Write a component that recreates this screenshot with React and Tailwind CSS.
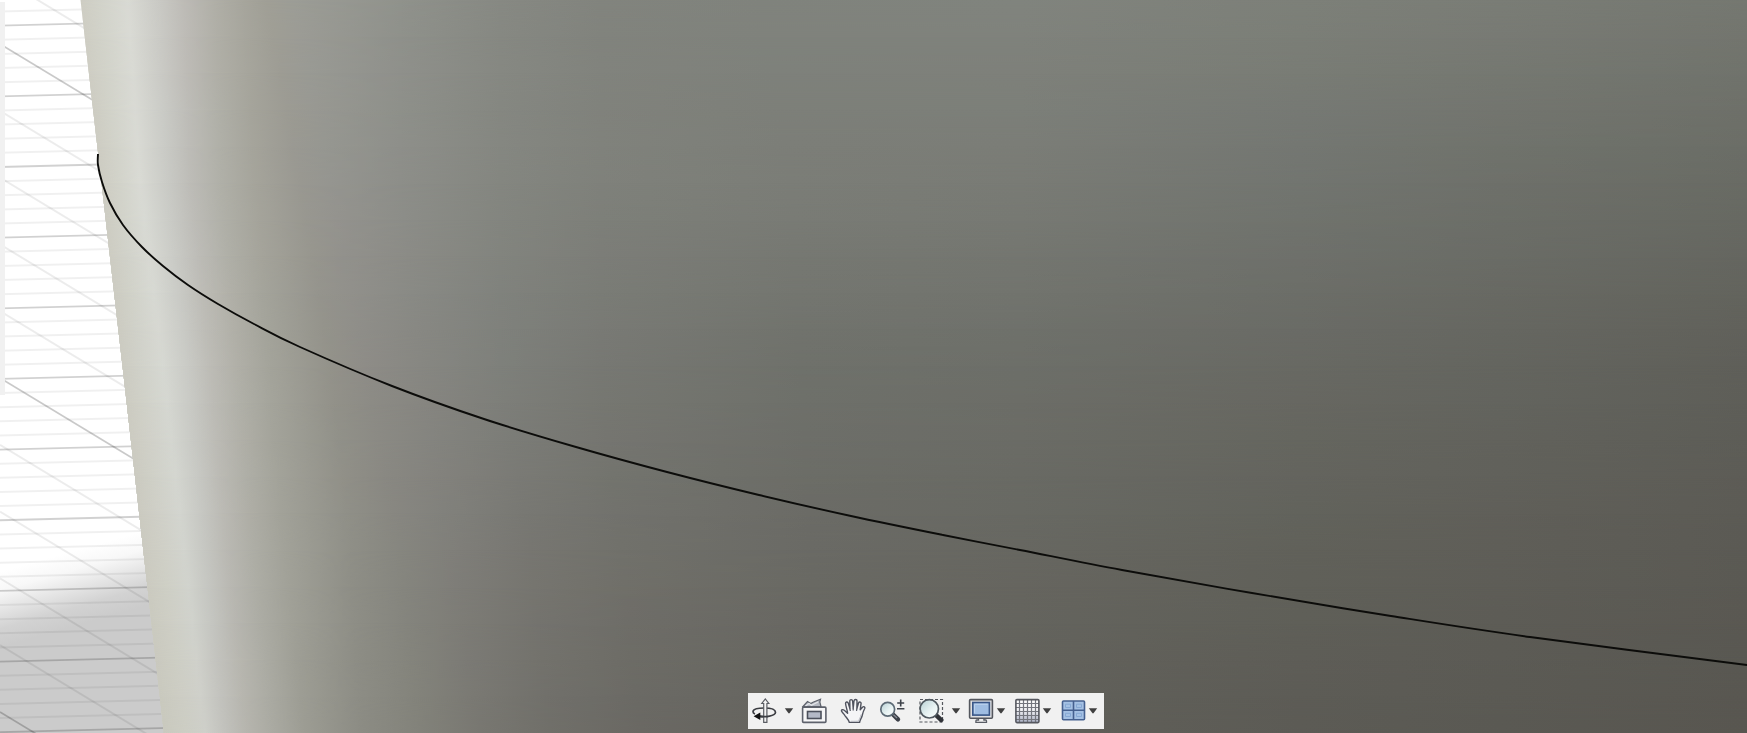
import React from "react";

/* Surface shading: every row lists the same columns, so positions and colours can be blended between rows. */
const KEYS = [
  { y: 0, x: [80, 100, 128, 158, 185, 215, 245, 267, 295, 400, 500, 600, 760, 1020, 1300, 1500, 1747], c: "cecdc3 d2d3ca d9dad4 cacac5 bdbbb6 b0afa7 a6a59c a09f96 9c9d96 90928c 878983 82847e 80837d 81847e 7d8079 7a7d76 757871" },
  { y: 183, x: [101, 120, 140, 166, 190, 220, 255, 300, 330, 400, 500, 600, 790, 1020, 1300, 1500, 1747], c: "cdccc2 d2d3ca d9dad4 cacbc6 bdbcb7 b0b0a8 a5a49b 999891 959590 8d8e89 848680 7f817b 7b7d77 797b75 727570 6e706a 696b64" },
  { y: 366, x: [122, 140, 163, 186, 210, 236, 268, 330, 365, 420, 500, 600, 800, 1020, 1300, 1500, 1747], c: "cccbc1 d0d1c9 d6d8d2 cacbc6 bdbcb6 b1b0a8 a4a49b 93928a 8e8c87 878782 7e807b 777873 6f716b 6d6f69 686963 64655f 5f5f59" },
  { y: 550, x: [143, 162, 184, 204, 226, 252, 284, 350, 400, 450, 530, 620, 810, 1020, 1300, 1500, 1747], c: "cbcac0 cfcfc6 d2d4ce c6c7c2 bab9b3 aeaea6 a2a299 8f8f87 86867f 807f7a 777671 71716b 6a6a65 676761 61615a 5f5e58 5b5a54" },
  { y: 733, x: [164, 185, 205, 225, 246, 272, 305, 360, 420, 480, 550, 640, 820, 1020, 1300, 1500, 1747], c: "c9c9be cccdc3 cecfc9 c1c1bc b6b5ae aaaaa2 9c9c93 8c8c84 82827a 787771 706f69 6a6863 64635d 605f59 5c5b55 5a5953 585650" },
];

const rgb = (hex) => [0, 2, 4].map((i) => parseInt(hex.slice(i, i + 2), 16));
const mix = (a, b, t) => a + (b - a) * t;
const STEPS = 5;

const ROWS = KEYS.flatMap((key, k) => {
  const next = KEYS[k + 1];
  const from = key.c.split(" ").map(rgb);
  const to = next ? next.c.split(" ").map(rgb) : from;
  return Array.from({ length: next ? STEPS : 1 }, (_, s) => {
    const t = s / STEPS;
    return {
      y: next ? mix(key.y, next.y, t) : key.y,
      stops: key.x.map((x, i) => [
        next ? mix(x, next.x[i], t) : x,
        `rgb(${from[i].map((v, n) => mix(v, to[i][n], t).toFixed(1)).join(",")})`,
      ]),
    };
  });
});

const EDGE = [[98, 154], [98, 165], [102, 182], [110, 203], [123, 225], [142, 247], [163, 266], [188, 285], [218, 304], [254, 324], [300, 347], [392, 386], [484, 419], [576, 447], [667, 472], [759, 495], [851, 516], [943, 535], [1020, 550], [1122, 570], [1252, 593], [1391, 616], [1530, 637], [1747, 665]];

function smooth(points) {
  let d = `M${points[0][0]} ${points[0][1]}`;
  for (let i = 0; i < points.length - 1; i++) {
    const a = points[Math.max(i - 1, 0)];
    const b = points[i];
    const c = points[i + 1];
    const e = points[Math.min(i + 2, points.length - 1)];
    d += ` C${b[0] + (c[0] - a[0]) / 6} ${b[1] + (c[1] - a[1]) / 6} ${c[0] - (e[0] - b[0]) / 6} ${c[1] - (e[1] - b[1]) / 6} ${c[0]} ${c[1]}`;
  }
  return d;
}

function Scene() {
  const flat = Array.from({ length: 56 }, (_, k) => k - 2);
  const slanted = Array.from({ length: 14 }, (_, k) => k - 3);
  return (
    <svg
      className="absolute inset-0 h-full w-full"
      viewBox="0 0 1747 733"
      preserveAspectRatio="xMinYMin slice"
      role="img"
      aria-label="Model viewport"
    >
      <defs>
        <linearGradient id="shadow" gradientUnits="userSpaceOnUse" x1="0" y1="572" x2="20" y2="642">
          <stop offset="0" stopColor="#cbcbcb" stopOpacity="0" />
          <stop offset="0.25" stopColor="#cbcbcb" stopOpacity="0.14" />
          <stop offset="0.75" stopColor="#cbcbcb" stopOpacity="0.86" />
          <stop offset="1" stopColor="#cbcbcb" />
        </linearGradient>
        <clipPath id="body">
          <path d="M80.5 0L122.5 366L164 733H1747V0Z" />
        </clipPath>
        {ROWS.map((row, i) => (
          <React.Fragment key={row.y}>
            <linearGradient id={`row${i}`} gradientUnits="userSpaceOnUse" x1="0" y1="0" x2="1747" y2="0">
              {row.stops.map(([x, color], n) => (
                <stop key={n} offset={x / 1747} stopColor={color} />
              ))}
            </linearGradient>
            {i > 0 && (
              <>
                <linearGradient id={`fade${i}`} gradientUnits="userSpaceOnUse" x1="0" y1={ROWS[i - 1].y} x2="0" y2={row.y}>
                  <stop offset="0" stopColor="#fff" stopOpacity="0" />
                  <stop offset="1" stopColor="#fff" />
                </linearGradient>
                <mask id={`mask${i}`} maskUnits="userSpaceOnUse" x="0" y="0" width="1747" height="733">
                  <rect width="1747" height="733" fill={`url(#fade${i})`} />
                </mask>
              </>
            )}
          </React.Fragment>
        ))}
      </defs>

      <rect width="1747" height="733" fill="#fff" />
      <rect width="200" height="733" fill="url(#shadow)" />
      {flat.map((k) => {
        const y = 25.7 + 14.13 * k;
        return (
          <line key={k} x1="0" y1={y} x2="200" y2={y - 5} stroke="#000" strokeWidth={k % 5 === 0 ? 1.8 : 2} strokeOpacity={k % 5 === 0 ? 0.18 : 0.06} />
        );
      })}
      {slanted.map((k) => {
        const y = 44 + 66.8 * k;
        return (
          <line key={k} x1="0" y1={y} x2="200" y2={y + 121} stroke="#000" strokeWidth={k % 5 === 0 ? 1.7 : 2} strokeOpacity={k % 5 === 0 ? 0.21 : 0.075} />
        );
      })}
      <rect y="2" width="5" height="393" fill="#f1f1f1" />

      <g clipPath="url(#body)">
        <rect width="1747" height="733" fill="url(#row0)" />
        {ROWS.slice(1).map((row, i) => (
          <rect key={row.y} width="1747" height="733" fill={`url(#row${i + 1})`} mask={`url(#mask${i + 1})`} />
        ))}
      </g>
      <path d={smooth(EDGE)} fill="none" stroke="#0c0c0a" strokeWidth="1.9" />
    </svg>
  );
}

function Icon({ children }) {
  return (
    <svg width="26" height="26" viewBox="0 0 26 26" fill="none" aria-hidden="true" className="block shrink-0">
      {children}
    </svg>
  );
}

const OrbitIcon = () => (
  <Icon>
    <path d="M8 18.2C14 19.5 24.5 18 24.5 14.3C24.5 11 18 10 13 10C7.5 10 2 11.2 2 13.8C2 14.8 2.8 15.5 4 16" stroke="#3b3d42" strokeWidth="1.7" />
    <path d="M12.7 24.3V5.5H10.8L14.3 1L17.8 5.5H15.9V24.3Z" fill="#f4f4f4" stroke="#5a5d63" strokeWidth="1.2" />
    <path d="M9 18.3C11 18.7 14.5 18.8 17 18.5" stroke="#3b3d42" strokeWidth="1.7" />
    <path d="M2.6 18.3L9.3 14.6V22Z" fill="#111" />
  </Icon>
);

const LookAtIcon = () => (
  <Icon>
    <path d="M2 8.5L6.5 3.5L9.8 5.5L12 4.3L19.5 1.3L18.8 4L20 8.5Z" fill="#b5b9c2" stroke="#5e626c" strokeWidth="1.2" />
    <path d="M4.5 8L8 5.5L10.5 7.3L17 4" stroke="#e4e6ea" strokeWidth="1.2" />
    <rect x="1.6" y="9.1" width="23.3" height="15.3" rx="1" fill="#f6f6f7" stroke="#5e626c" strokeWidth="1.6" />
    <rect x="6.5" y="13.5" width="13.5" height="7" fill="#b4b9c6" stroke="#4c505b" strokeWidth="1.6" />
  </Icon>
);

const PanIcon = () => (
  <Icon>
    <path
      d="M9.3 24.4C8.8 21.8 6.5 19.8 4.8 17.3C3.7 15.6 2 14.4 1.5 13.1C1.2 11.7 2.9 11.2 4.2 12.2L7.6 15.2C7.4 12 5.8 8.5 5.6 5.7C5.4 3.8 7.6 3.3 8.2 5L9.9 10.6L9.8 3C9.8 1.1 12.4 1.1 12.6 3L13.2 10.2L14 2.8C14.4 1 17.1 1.2 17 3L16.9 10.6L18.6 4.8C19.4 3.3 21.5 4.1 21 5.9L20.2 11.8L22.5 9.2C23.7 8 25.3 9 24.7 10.5C23.2 13.2 22.8 15 22.2 17.5C21.7 20.2 19.8 21.5 19.6 24.4Z"
      fill="#f5f5f7" stroke="#50535e" strokeWidth="1.4" strokeLinejoin="round"
    />
    <path d="M9.9 10.6L10.3 13M13.2 10.2V12.5M16.9 10.6L16.5 12.8" stroke="#50535e" strokeWidth="1.2" />
    <path d="M11 23.3C14 23.3 17 23.3 18.8 23.1C19 21 20.6 19.5 21.1 16.5" stroke="#b9bbc2" />
  </Icon>
);

const LensGradient = ({ id }) => (
  <linearGradient id={id} x1="0" y1="0" x2="1" y2="1">
    <stop offset="0" stopColor="#b7d0d4" />
    <stop offset="0.6" stopColor="#eaf4f4" />
    <stop offset="1" stopColor="#fff" />
  </linearGradient>
);

const ZoomIcon = () => (
  <Icon>
    <LensGradient id="lensA" />
    <path d="M13.8 16.2L19 21.4" stroke="#3c4048" strokeWidth="4.4" strokeLinecap="round" />
    <path d="M14.5 16.7L18 20" stroke="#8a8f98" strokeWidth="1.2" />
    <circle cx="8.7" cy="11.2" r="6.9" fill="url(#lensA)" stroke="#5d6b76" strokeWidth="1.7" />
    <path d="M18.2 5H25.2M21.7 1.4V8.6M18 10.7H25.4" stroke="#3f434b" strokeWidth="1.6" />
  </Icon>
);

const ZoomWindowIcon = () => (
  <Icon>
    <LensGradient id="lensB" />
    <rect x="2" y="1.5" width="22.5" height="22.5" stroke="#55585e" strokeWidth="1.2" strokeDasharray="3 2" />
    <path d="M18.3 17.3L23.3 22.1" stroke="#303338" strokeWidth="4.4" strokeLinecap="round" />
    <circle cx="11.3" cy="10.8" r="9.2" fill="url(#lensB)" stroke="#505960" strokeWidth="1.7" />
  </Icon>
);

const DisplayIcon = () => (
  <Icon>
    <path d="M10.5 20.5V22H8.7Q7.9 22 7.9 23V24.3H18.5V23Q18.5 22 17.7 22H15.9V20.5" fill="#eee" stroke="#595d65" strokeWidth="1.3" />
    <rect x="1.6" y="1.6" width="22.8" height="18.6" rx="1" fill="#dfe0e2" stroke="#54575e" strokeWidth="1.6" />
    <rect x="4.8" y="4.5" width="16.6" height="12.6" fill="#9fbde2" stroke="#3a5788" strokeWidth="1.6" />
    <path d="M6.5 15V6.3H19.7" stroke="#bcd2ee" />
  </Icon>
);

const GridIcon = () => (
  <Icon>
    <linearGradient id="cells" x1="0" y1="0" x2="0" y2="1">
      <stop offset="0" stopColor="#fff" />
      <stop offset="0.45" stopColor="#f1f1f4" />
      <stop offset="1" stopColor="#a9afc2" />
    </linearGradient>
    <rect x="1.9" y="1.6" width="23" height="23" rx="1" fill="url(#cells)" />
    <path d="M5.5 2V24M9.5 2V24M13.5 2V24M17.5 2V24M21.5 2V24M2 5.5H25M2 9.5H25M2 13.5H25M2 17.5H25M2 21.5H25" stroke="#74767e" strokeWidth="1.2" />
    <rect x="1.9" y="1.6" width="23" height="23" rx="1" stroke="#56585f" strokeWidth="1.6" />
  </Icon>
);

const ViewportsIcon = () => (
  <Icon>
    <rect x="2.5" y="3" width="22" height="18.7" rx="1" fill="#a5c1e4" stroke="#45608f" strokeWidth="1.6" />
    <path d="M13.5 3V22M2.5 12.3H24.5" stroke="#45608f" strokeWidth="1.6" />
    <path d="M5.5 6.2H10.5V9.5H5.5ZM16.5 6.2H21.5V9.5H16.5ZM5.5 15.3H10.5V18.5H5.5ZM16.5 15.3H21.5V18.5H16.5Z" stroke="#86a8d4" />
  </Icon>
);

function Caret({ label }) {
  return (
    <button type="button" aria-label={label} className="flex h-[26px] w-3 items-center justify-center">
      <svg width="10" height="6" viewBox="0 0 10 6" aria-hidden="true">
        <path d="M0.8 0.3H9.2L5.7 5Q5 5.8 4.3 5Z" fill="#404040" />
      </svg>
    </button>
  );
}

function Tool({ label, single, children }) {
  return (
    <button type="button" aria-label={label} title={label} className={single ? "flex w-[33px]" : "flex"}>
      {children}
    </button>
  );
}

export default function App() {
  return (
    <main className="relative flex min-h-screen flex-col items-center justify-end overflow-hidden bg-white pb-1 pl-[105px]">
      <Scene />
      <div role="toolbar" aria-label="Navigation" className="relative flex h-9 items-center gap-[6px] bg-[#f1f1f1] pl-[3px] pr-1">
        <div className="flex gap-[6px]">
          <Tool label="Orbit"><OrbitIcon /></Tool>
          <Caret label="Orbit options" />
        </div>
        <Tool label="Look At" single><LookAtIcon /></Tool>
        <Tool label="Pan" single><PanIcon /></Tool>
        <Tool label="Zoom" single><ZoomIcon /></Tool>
        <div className="flex gap-[6px]">
          <Tool label="Zoom Window"><ZoomWindowIcon /></Tool>
          <Caret label="Zoom options" />
        </div>
        <div className="flex gap-px pr-px">
          <Tool label="Display Settings"><DisplayIcon /></Tool>
          <Caret label="Display options" />
        </div>
        <div className="flex gap-px pr-px">
          <Tool label="Grid and Snaps"><GridIcon /></Tool>
          <Caret label="Grid options" />
        </div>
        <div className="flex gap-px pr-px">
          <Tool label="Viewports"><ViewportsIcon /></Tool>
          <Caret label="Viewport options" />
        </div>
      </div>
    </main>
  );
}
